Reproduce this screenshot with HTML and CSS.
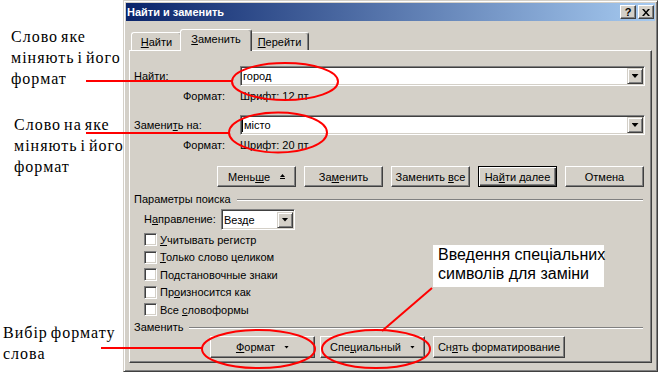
FILE: index.html
```html
<!DOCTYPE html>
<html lang="ru">
<head>
  <meta charset="UTF-8" />
  <title>Найти и заменить</title>
  <link rel="stylesheet" href="styles.css">
</head>
<body>
  <div class="canvas">
    <div class="dialog">
      <div class="titlebar">
        <span class="title">Найти и заменить</span>
        <div class="title-btns">
          <span class="tbtn">?</span>
          <span class="tbtn">
            <svg width="8" height="7" viewBox="0 0 8 7"><path d="M0 0h2l2 2.5L6 0h2L5 3.5 8 7H6L4 4.5 2 7H0l3-3.5z" fill="#000"/></svg>
          </span>
        </div>
      </div>

      <div class="dlg-body">
        <div class="tabs">
          <div class="tab t1"><span><u>Н</u>айти</span></div>
          <div class="tab active"><span><u>З</u>аменить</span></div>
          <div class="tab t3"><span><u>П</u>ерейти</span></div>
        </div>

        <div class="panel">
          <div class="field-row first">
            <span class="label">Найти:</span>
            <div class="combo"><span class="combo-text">город</span><span class="drop"></span></div>
          </div>
          <div class="format-row"><span class="flabel">Формат:</span><span>Шрифт: 12 пт</span></div>

          <div class="field-row">
            <span class="label">Замени<u>т</u>ь на:</span>
            <div class="combo"><span class="combo-text"><i class="caret"></i>місто</span><span class="drop"></span></div>
          </div>
          <div class="format-row"><span class="flabel">Формат:</span><span>Шрифт: 20 пт</span></div>

          <div class="btn-row">
            <div class="btn"><span>Мень<u>ш</u>е</span>
              <svg class="less" width="5" height="5" viewBox="0 0 5 5"><path d="M2.5 0L5 3H0z" fill="#000"/><rect x="0" y="4" width="5" height="1" fill="#000"/></svg>
            </div>
            <div class="btn"><span>За<u>м</u>енить</span></div>
            <div class="btn"><span>Заменить <u>в</u>се</span></div>
            <div class="btn default"><span>На<u>й</u>ти далее</span></div>
            <div class="btn"><span>Отмена</span></div>
          </div>

          <div class="group-head"><span>Параметры поиска</span><i class="etch"></i></div>

          <div class="dir-row">
            <span class="dir-label">Н<u>а</u>правление:</span>
            <div class="combo small"><span class="combo-text">Везде</span><span class="drop"></span></div>
          </div>

          <div class="checks">
            <div class="check"><i class="box"></i><span><u>У</u>читывать регистр</span></div>
            <div class="check"><i class="box"></i><span><u>Т</u>олько слово целиком</span></div>
            <div class="check"><i class="box"></i><span>По<u>д</u>становочные знаки</span></div>
            <div class="check"><i class="box"></i><span>Пр<u>о</u>износится как</span></div>
            <div class="check"><i class="box"></i><span>Все <u>с</u>ловоформы</span></div>
          </div>

          <div class="group-head replace"><span>Заменить</span><i class="etch"></i></div>

          <div class="bottom-btns">
            <div class="btn b-format"><span><u>Ф</u>ормат</span><i class="tri"></i></div>
            <div class="btn b-special"><span>Спе<u>ц</u>иальный</span><i class="tri"></i></div>
            <div class="btn b-clear"><span>Сн<u>я</u>ть форматирование</span></div>
          </div>
        </div>
      </div>
    </div>

    <!-- подписи вокруг окна -->
    <div class="note note1">Слово яке<br>міняють і його<br>формат</div>
    <div class="note note2">Слово на яке<br>міняють і його<br>формат</div>
    <div class="note note3">Вибір формату<br>слова</div>
    <div class="callout">Введення спеціальних<br>символів для заміни</div>

    <svg class="marks" width="663" height="375" viewBox="0 0 663 375">
      <g fill="none" stroke="#f00" stroke-width="2">
        <line x1="86" y1="81" x2="232" y2="81"/>
        <line x1="86" y1="133" x2="229" y2="133"/>
        <line x1="101" y1="348" x2="202" y2="348"/>
        <line x1="432" y1="288" x2="382" y2="331"/>
        <ellipse cx="285" cy="81.5" rx="53" ry="18.5"/>
        <ellipse cx="278" cy="132.5" rx="49" ry="20"/>
        <ellipse cx="258.5" cy="349" rx="56.5" ry="19"/>
        <ellipse cx="376" cy="349" rx="54" ry="19"/>
      </g>
    </svg>
  </div>
</body>
</html>
```

FILE: styles.css
```css
* {
  margin: 0;
  padding: 0;
  box-sizing: border-box;
}
body {
  background: #fff;
  font-family: 'Liberation Sans', Arial, sans-serif;
  font-size: 11px;
  color: #000;
  overflow: hidden;
}
u {
  text-decoration: underline;
  text-underline-offset: 1px;
}
.canvas {
  position: relative;
  width: 663px;
  height: 375px;
}

/* окно */
.dialog {
  margin-left: 123px;
  width: 535px;
  height: 372px;
  background: #d4d0c8;
  border: 1px solid;
  border-color: #d4d0c8 #404040 #404040 #d4d0c8;
  box-shadow: inset 1px 1px #fff, inset -1px -1px #808080;
  padding: 2px;
}
.titlebar {
  height: 18px;
  display: flex;
  align-items: center;
  justify-content: space-between;
  background: linear-gradient(to right, #0a246a, #a6caf0);
  padding: 0 1px;
}
.title {
  color: #fff;
  font-weight: bold;
  font-size: 11px;
}
.title-btns {
  display: flex;
  gap: 2px;
}
.tbtn {
  width: 16px;
  height: 14px;
  display: flex;
  align-items: center;
  justify-content: center;
  background: #d4d0c8;
  border: 1px solid;
  border-color: #fff #404040 #404040 #fff;
  box-shadow: inset -1px -1px #808080;
  font-weight: bold;
  font-size: 11px;
  line-height: 1;
}

.dlg-body {
  padding: 8px 3px 0 3px;
}

/* вкладки */
.tabs {
  display: flex;
  align-items: flex-end;
  height: 21px;
  padding-left: 2px;
}
.tab {
  height: 18px;
  display: flex;
  align-items: center;
  justify-content: center;
  border: 1px solid;
  border-bottom: none;
  border-color: #fff #404040 #404040 #fff;
  box-shadow: inset -1px 0 #808080;
  border-radius: 3px 3px 0 0;
  padding-top: 1px;
  background: #d4d0c8;
}
.t1 { width: 51px; }
.t3 { width: 59px; }
.tab.active {
  width: 72px;
  height: 22px;
  margin: 0 -2px -1px;
  position: relative;
  z-index: 1;
  padding-top: 0;
  padding-bottom: 3px;
}

.panel {
  height: 313px;
  border: 1px solid;
  border-color: #fff #404040 #404040 #fff;
  box-shadow: inset -1px -1px #808080;
  padding: 0 6px 0 4px;
}

.field-row {
  display: flex;
  align-items: center;
  height: 20px;
  margin-top: 9px;
}
.field-row.first {
  margin-top: 15px;
}
.label {
  width: 106px;
}
.combo {
  flex: 1;
  height: 20px;
  display: flex;
  align-items: center;
  background: #fff;
  border: 1px solid;
  border-color: #808080 #fff #fff #808080;
  box-shadow: inset 1px 1px #404040, inset -1px -1px #d4d0c8;
}
.combo-text {
  flex: 1;
  padding-left: 2px;
  display: flex;
  align-items: center;
}
.caret {
  width: 1px;
  height: 13px;
  background: #000;
  margin-right: 1px;
  margin-left: -1px;
}
.drop {
  width: 16px;
  height: 16px;
  margin: 1px;
  display: flex;
  align-items: center;
  justify-content: center;
  background: #d4d0c8;
  border: 1px solid;
  border-color: #d4d0c8 #404040 #404040 #d4d0c8;
  box-shadow: inset 1px 1px #fff, inset -1px -1px #808080;
}
.drop::after {
  content: "";
  width: 7px;
  height: 4px;
  background: #000;
  clip-path: polygon(0 0, 100% 0, 50% 100%);
}
.format-row {
  display: flex;
  align-items: center;
  height: 20px;
  padding-left: 49px;
}
.flabel {
  width: 57px;
}

/* кнопки */
.btn-row {
  display: flex;
  justify-content: flex-end;
  gap: 8px;
  margin-top: 11px;
  padding-right: 1px;
}
.btn {
  width: 79px;
  height: 21px;
  display: flex;
  align-items: center;
  justify-content: center;
  background: #d4d0c8;
  border: 1px solid;
  border-color: #fff #404040 #404040 #fff;
  box-shadow: inset -1px -1px #808080;
  white-space: nowrap;
}
.btn .less {
  margin-left: 10px;
}
.btn.default {
  border-color: #000;
  box-shadow: inset 1px 1px #fff, inset -1px -1px #404040, inset -2px -2px #808080;
}

.group-head {
  display: flex;
  align-items: center;
  height: 14px;
  margin-top: 5px;
}
.etch {
  flex: 1;
  height: 2px;
  border-top: 1px solid #808080;
  border-bottom: 1px solid #fff;
  margin: 1px 2px 0 6px;
}
.group-head.replace {
  margin-top: 0;
}

.dir-row {
  display: flex;
  align-items: flex-start;
  height: 22px;
  margin-top: 3px;
  padding-left: 10px;
}
.dir-label {
  width: 77px;
  line-height: 21px;
}
.combo.small {
  flex: none;
  width: 74px;
  height: 21px;
}

.checks {
  height: 89px;
  padding-left: 10px;
}
.check {
  height: 17.5px;
  display: flex;
  align-items: center;
  gap: 3px;
}
.box {
  width: 13px;
  height: 13px;
  background: #fff;
  border: 1px solid;
  border-color: #808080 #fff #fff #808080;
  box-shadow: inset 1px 1px #404040, inset -1px -1px #d4d0c8;
}

.bottom-btns {
  display: flex;
  margin-top: 2px;
  margin-left: 76px;
}
.bottom-btns .btn {
  height: 22px;
}
.b-format { width: 105px; }
.b-special { width: 105px; margin-left: 5px; }
.b-clear { width: 132px; margin-left: 8px; }
.tri {
  width: 5px;
  height: 3px;
  margin-left: 9px;
  background: #000;
  clip-path: polygon(0 0, 100% 0, 50% 100%);
}

/* подписи */
.note {
  position: absolute;
  font-family: 'Liberation Serif', 'Times New Roman', serif;
  font-size: 16px;
  line-height: 21px;
  letter-spacing: 1px;
  word-spacing: -2px;
  white-space: nowrap;
}
.note1 { left: 11px; top: 26px; }
.note2 { left: 14px; top: 114px; }
.note3 { left: 3px; top: 322px; }
.callout {
  position: absolute;
  left: 433px;
  top: 245px;
  width: 171px;
  height: 42px;
  background: #fff;
  font-size: 16px;
  line-height: 19px;
  padding-left: 5px;
  white-space: nowrap;
}
.marks {
  position: absolute;
  left: 0;
  top: 0;
  pointer-events: none;
}
```
